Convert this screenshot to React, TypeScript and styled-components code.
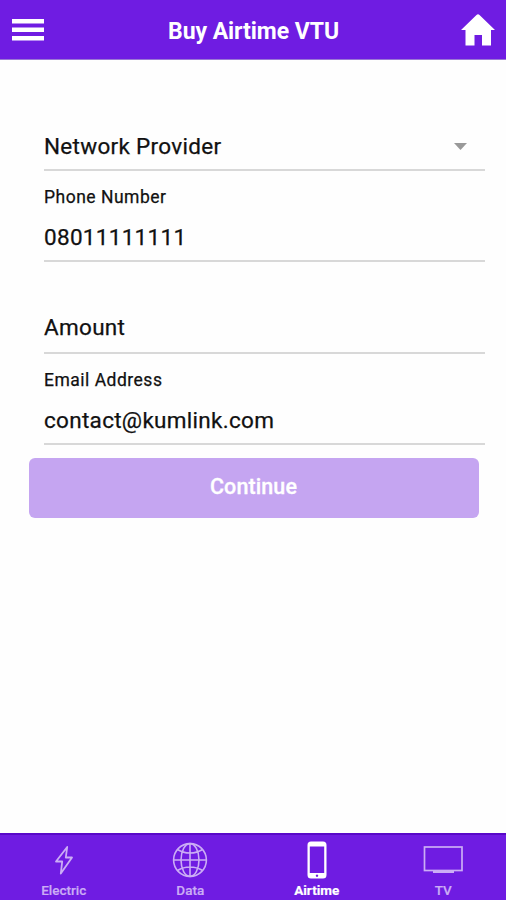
import React from "react";
import styled, { createGlobalStyle } from "styled-components";

const GlobalStyle = createGlobalStyle`
  * { box-sizing: border-box; }
  body { margin: 0; background: #fefefe; font-family: Roboto, sans-serif; }
  button, input { font: inherit; letter-spacing: inherit; }
`;

const Screen = styled.div`
  display: flex;
  flex-direction: column;
  width: 506px;
  height: 900px;
  overflow: hidden;
`;

const Header = styled.header`
  display: grid;
  grid-template-columns: 60px 1fr 60px;
  align-items: center;
  height: 60px;
  background: #6f1ce2;
  border-bottom: 1px solid #9a78d4;
  color: #fff;
`;

const Title = styled.h1`
  margin: 0;
  padding-top: 4px;
  padding-left: 1px;
  text-align: center;
  font-size: 23px;
  line-height: 28px;
  font-weight: 700;
  letter-spacing: -0.05px;
`;

const IconButton = styled.button`
  display: flex;
  height: 58px;
  padding: 1px 0 0 12px;
  align-items: center;
  border: 0;
  background: none;
  color: inherit;
`;

const HomeButton = styled(IconButton)`
  padding-left: 15px;
`;

const Form = styled.main`
  flex: 1;
  padding-top: 79px;
`;

const Field = styled.label<{ $height: number }>`
  display: flex;
  flex-direction: column;
  justify-content: flex-end;
  width: 441px;
  height: ${(p) => p.$height}px;
  margin-left: 44px;
  border-bottom: 2px solid #d8d8d8;
  color: #111;
  -webkit-text-stroke: 0.25px #111;
`;

const Caption = styled.span`
  font-size: 17.5px;
  line-height: 22px;
  letter-spacing: 0.5px;
`;

const Value = styled.span<{ $spacing?: number; $raise?: number }>`
  display: flex;
  align-items: center;
  justify-content: space-between;
  height: 28px;
  margin-top: ${(p) => 15 - (p.$raise ?? 0)}px;
  margin-bottom: ${(p) => 9 + (p.$raise ?? 0)}px;
  font-size: 22.5px;
  letter-spacing: ${(p) => p.$spacing ?? 0.3}px;
`;

const Caret = styled.svg`
  margin-right: 18px;
`;

const Continue = styled.button`
  display: block;
  width: 450px;
  height: 60px;
  margin: 13px 0 0 28.5px;
  padding: 0 0 3px;
  border: 0;
  border-radius: 6px;
  background: #c5a5f1;
  color: #fff;
  font-size: 21.5px;
  font-weight: 500;
  letter-spacing: 0.1px;
  -webkit-text-stroke: 0.3px #fff;
`;

const TabBar = styled.nav`
  display: grid;
  grid-template-columns: repeat(4, 1fr);
  height: 67px;
  border-top: 2px solid #5908c8;
  background: #6f1ce2;
`;

const Tab = styled.button<{ $active?: boolean }>`
  display: flex;
  flex-direction: column;
  align-items: center;
  padding: 4px 0 0 1px;
  border: 0;
  background: none;
  color: ${(p) => (p.$active ? "#fff" : "#cbadf5")};
  font-size: 13.5px;
  font-weight: ${(p) => (p.$active ? 700 : 500)};
  line-height: 16px;
  -webkit-text-stroke: 0.2px currentColor;
`;

const TabIcon = styled.span`
  display: flex;
  align-items: center;
  justify-content: center;
  height: 42px;
  margin-bottom: 1px;
`;

const Bolt = () => (
  <svg width="20" height="32" viewBox="0 0 20 32" fill="none" stroke="currentColor" strokeWidth="1.8" strokeLinejoin="round">
    <path d="M13.2 3 2 17.500h6.200L6.800 29.500 18 13.500h-6.200z" />
  </svg>
);

const Globe = () => (
  <svg width="36" height="36" viewBox="0 0 36 36" fill="none" stroke="currentColor" strokeWidth="1.6">
    <circle cx="18" cy="18" r="16.4" />
    <ellipse cx="18" cy="18" rx="9" ry="16.4" />
    <path d="M18 1.6v32.8M1.6 18h32.8M5.500 7.500Q11 11 18 11t12.500-3.500M5.500 28.500Q11 25 18 25t12.500 3.500" />
  </svg>
);

const Phone = () => (
  <svg width="20" height="38" viewBox="0 0 20 38">
    <path fill="currentColor" fillRule="evenodd" d="M4 .5h12Q19.500.5 19.500 4v30q0 3.500-3.500 3.500H4Q.5 37.500.5 34V4Q.5.5 4 .5zM2.800 5.500V32H17.200V5.500zM10 33.500a1.200 1.200 0 1 0 .01 0z" />
  </svg>
);

const Tv = () => (
  <svg width="40" height="28" viewBox="0 0 40 28">
    <rect x="1.500" y="1" width="37.500" height="23.500" fill="none" stroke="currentColor" strokeWidth="1.700" />
    <path d="M10 24h21v3H10z" fill="currentColor" />
  </svg>
);

const tabs = [
  { name: "Electric", icon: <Bolt /> },
  { name: "Data", icon: <Globe /> },
  { name: "Airtime", icon: <Phone />, active: true },
  { name: "TV", icon: <Tv /> },
];

export default function App() {
  return (
    <>
      <GlobalStyle />
      <Screen>
        <Header>
          <IconButton aria-label="Menu">
            <svg width="32" height="24" viewBox="0 0 32 24" fill="currentColor">
              <path d="M0 1h32v4.500H0zM0 9.500h32v4.500H0zM0 18h32v4.500H0z" />
            </svg>
          </IconButton>
          <Title>Buy Airtime VTU</Title>
          <HomeButton aria-label="Home">
            <svg width="34" height="32" viewBox="0 0 34 32" fill="currentColor">
              <path d="M15.500 1q1.500-1.400 3 0L34 16h-4v15.500h-9V21h-7.500v10.500h-9V16H0z" />
            </svg>
          </HomeButton>
        </Header>
        <Form>
          <Field $height={32}>
            <Value $raise={1}>
              Network Provider
              <Caret width="13" height="7" viewBox="0 0 13 7"><path d="M0 0h13L6.500 7z" fill="#999" /></Caret>
            </Value>
          </Field>
          <Field $height={91}>
            <Caption>Phone Number</Caption>
            <Value>08011111111</Value>
          </Field>
          <Field $height={92}>
            <Value $raise={2}>Amount</Value>
          </Field>
          <Field $height={91}>
            <Caption>Email Address</Caption>
            <Value>contact@kumlink.com</Value>
          </Field>
          <Continue>Continue</Continue>
        </Form>
        <TabBar>
          {tabs.map((tab) => (
            <Tab key={tab.name} $active={tab.active}>
              <TabIcon>{tab.icon}</TabIcon>
              {tab.name}
            </Tab>
          ))}
        </TabBar>
      </Screen>
    </>
  );
}
